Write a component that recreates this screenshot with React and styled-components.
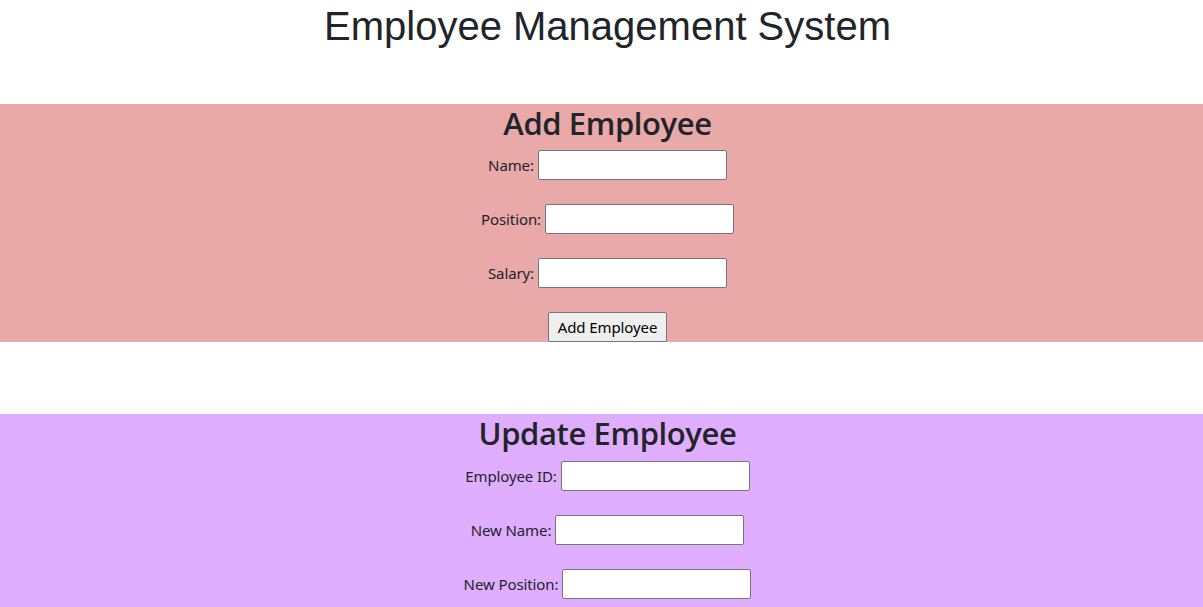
import React from 'react';
import styled, { createGlobalStyle } from 'styled-components';

const GlobalStyle = createGlobalStyle`
    body {
        margin: 0;
        background: #fff;
        color: #212529;
        font-family: 'Noto Sans', 'Open Sans', sans-serif;
        font-size: 15px;
    }
`;

const Page = styled.div`
    display: flex;
    flex-direction: column;
`;

// 상단 제목
const Title = styled.h1`
    margin: 0 0 54px;
    padding: 2px 0 0 12px;
    font-family: 'Liberation Sans', Arial, sans-serif;
    font-weight: 400;
    font-size: 40px;
    line-height: 48px;
    text-align: center;
`;

const Section = styled.section`
    background: ${props => props.color};
    display: flex;
    flex-direction: column;
    align-items: center;
    padding-left: 12px;
    margin-bottom: ${props => props.gap || 0}px;
`;

const SectionTitle = styled.h2`
    margin: 0 0 8px;
    font-family: 'Open Sans', 'Noto Sans', sans-serif;
    font-size: 31px;
    font-weight: 600;
    line-height: 38.4px;
    letter-spacing: -0.4px;
`;

const Form = styled.form`
    display: flex;
    flex-direction: column;
    align-items: center;
    gap: 24px;
`;

const Row = styled.div`
    display: flex;
    align-items: center;
    gap: 4px;
`;

const Label = styled.label`
    font-size: 15px;
    letter-spacing: -0.1px;
`;

const Input = styled.input`
    box-sizing: border-box;
    width: 189px;
    height: 30px;
    border: 1px solid #767676;
    border-radius: 2px;
    background: #fff;
    outline: none;
`;

const Button = styled.button`
    box-sizing: border-box;
    width: 119px;
    height: 30px;
    background: #efefef;
    border: 1px solid #767676;
    border-radius: 2px;
    font-family: 'Noto Sans', 'Open Sans', sans-serif;
    font-size: 15px;
    letter-spacing: -0.1px;
    color: #000;
    padding: 0;
`;

const Field = ({ label }) => (
    <Row>
        <Label>{label}</Label>
        <Input type="text" />
    </Row>
);

const App = () => {
    return (
        <Page>
            <GlobalStyle />
            <Title>Employee Management System</Title>
            <Section color="#e8a9a8" gap={72}>
                <SectionTitle>Add Employee</SectionTitle>
                <Form>
                    <Field label="Name:" />
                    <Field label="Position:" />
                    <Field label="Salary:" />
                    <Button type="button">Add Employee</Button>
                </Form>
            </Section>
            <Section color="#e0aeff">
                <SectionTitle>Update Employee</SectionTitle>
                <Form>
                    <Field label="Employee ID:" />
                    <Field label="New Name:" />
                    <Field label="New Position:" />
                    <Field label="New Salary:" />
                </Form>
            </Section>
        </Page>
    );
};

export default App;
